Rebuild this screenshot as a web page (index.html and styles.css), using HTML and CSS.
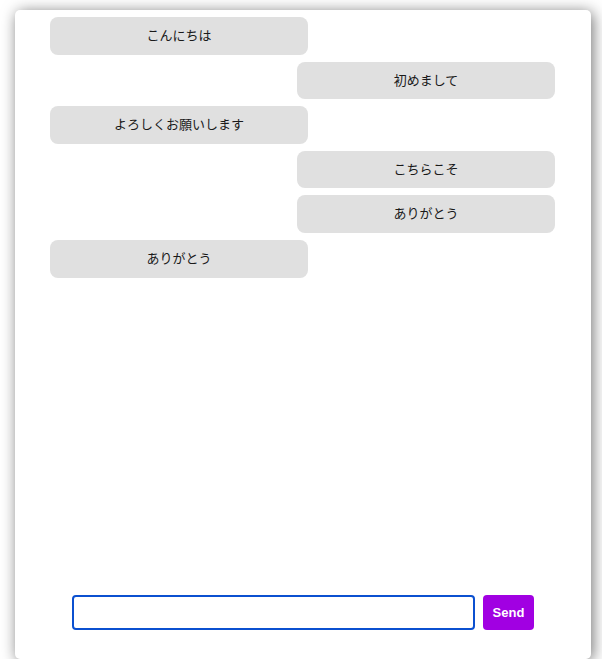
FILE: index.html
```html
<!DOCTYPE html>
<html lang="ja">
<head>
<meta charset="utf-8">
<title>Chat</title>
<link rel="stylesheet" href="styles.css">
</head>
<body>
<div class="chat">
  <div class="messages">
    <div class="msg left">こんにちは</div>
    <div class="msg right">初めまして</div>
    <div class="msg left">よろしくお願いします</div>
    <div class="msg right">こちらこそ</div>
    <div class="msg right">ありがとう</div>
    <div class="msg left">ありがとう</div>
  </div>
  <form class="composer">
    <input class="field" type="text" autofocus>
    <button class="send" type="button">Send</button>
  </form>
</div>
</body>
</html>
```
FILE: styles.css
```css
html, body {
  margin: 0;
  background: #ffffff;
}
body {
  padding: 10px 0 0 15px;
  font-family: "Liberation Sans", Arial, "Noto Sans CJK JP", sans-serif;
}
.chat {
  box-sizing: border-box;
  width: 576px;
  height: 649px;
  background: #fff;
  border-radius: 5px;
  box-shadow: 2px 2px 15px rgba(0, 0, 0, 0.55);
  display: flex;
  flex-direction: column;
}
.messages {
  flex: 1;
  display: flex;
  flex-direction: column;
  gap: 7px;
  padding: 7px 36px 0 35px;
}
.msg {
  box-sizing: border-box;
  width: 258px;
  padding: 9px 10px 11px;
  line-height: 17.6px;
  font-size: 13px;
  font-family: "Noto Sans CJK JP", sans-serif;
  color: #1a1a1a;
  text-align: center;
  background: #e0e0e0;
  border-radius: 8px;
}
.msg.right {
  align-self: flex-end;
}
.composer {
  margin: 0;
  display: flex;
  justify-content: center;
  gap: 8px;
  padding: 0 0 29px 0;
}
.field {
  box-sizing: border-box;
  width: 403px;
  height: 35px;
  border: 2px solid #0b50d0;
  border-radius: 4px;
  outline: none;
  padding: 0 8px;
  font-size: 14px;
  font-family: "Liberation Sans", Arial, sans-serif;
}
.send {
  box-sizing: border-box;
  width: 51px;
  height: 35px;
  border: none;
  border-radius: 4px;
  background: #a100e2;
  color: #fff;
  font-weight: bold;
  font-size: 13px;
  font-family: "Liberation Sans", Arial, sans-serif;
  padding: 0;
}
```
